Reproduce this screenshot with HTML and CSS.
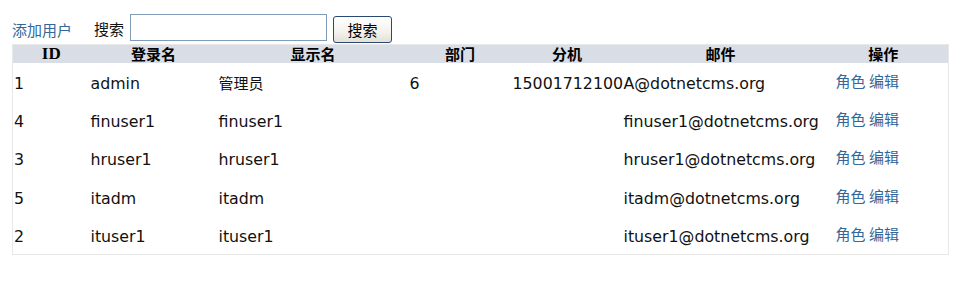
FILE: index.html
```html
<!DOCTYPE html>
<html lang="zh-CN">
<head>
<meta charset="utf-8">
<title>用户管理</title>
<link rel="stylesheet" href="styles.css">
</head>
<body>
<div class="page">
  <div class="toolbar">
    <a class="add-link" href="#">添加用户</a>
    <label class="search-label" for="q">搜索</label>
    <input class="search-input" id="q" type="text">
    <button class="search-btn" type="button">搜索</button>
  </div>
  <table class="users">
    <colgroup>
      <col class="c-id"><col class="c-login"><col class="c-name"><col class="c-dept"><col class="c-ext"><col class="c-mail"><col class="c-op">
    </colgroup>
    <thead>
      <tr>
        <th class="th-id">ID</th><th>登录名</th><th>显示名</th><th>部门</th><th>分机</th><th>邮件</th><th>操作</th>
      </tr>
    </thead>
    <tbody>
      <tr><td>1</td><td>admin</td><td class="cjk">管理员</td><td>6</td><td>15001712100</td><td>A@dotnetcms.org</td><td class="op"><a href="#">角色</a> <a href="#">编辑</a></td></tr>
      <tr><td>4</td><td>finuser1</td><td>finuser1</td><td></td><td></td><td>finuser1@dotnetcms.org</td><td class="op"><a href="#">角色</a> <a href="#">编辑</a></td></tr>
      <tr><td>3</td><td>hruser1</td><td>hruser1</td><td></td><td></td><td>hruser1@dotnetcms.org</td><td class="op"><a href="#">角色</a> <a href="#">编辑</a></td></tr>
      <tr><td>5</td><td>itadm</td><td>itadm</td><td></td><td></td><td>itadm@dotnetcms.org</td><td class="op"><a href="#">角色</a> <a href="#">编辑</a></td></tr>
      <tr><td>2</td><td>ituser1</td><td>ituser1</td><td></td><td></td><td>ituser1@dotnetcms.org</td><td class="op"><a href="#">角色</a> <a href="#">编辑</a></td></tr>
    </tbody>
  </table>
</div>
</body>
</html>
```
FILE: styles.css
```css
html, body {
  margin: 0;
  padding: 0;
  background: #fff;
}
.page {
  padding: 14px 12px 0 12px;
  font-family: "DejaVu Sans", "Noto Sans CJK SC", sans-serif;
  font-size: 15.8px;
  color: #111;
}
.toolbar {
  display: flex;
  align-items: center;
  height: 29px;
}
.add-link {
  color: #336699;
  text-decoration: none;
  font-size: 15px;
  font-family: "Noto Sans CJK SC", sans-serif;
  margin-right: 22px;
  padding-top: 1px;
}
.search-label {
  font-size: 15px;
  font-family: "Noto Sans CJK SC", sans-serif;
  margin-right: 6px;
}
.search-input {
  box-sizing: border-box;
  width: 197px;
  height: 27px;
  margin: 0 6px 0 0;
  border: 1px solid #7f9db9;
  padding: 0 3px;
  align-self: flex-start;
}
.search-btn {
  box-sizing: border-box;
  width: 59px;
  height: 27px;
  margin: 2px 0 0 0;
  align-self: flex-start;
  border: 1px solid #2b4a72;
  border-radius: 3px;
  background: linear-gradient(#ffffff, #f3f2ec 60%, #e3e1d6);
  font-family: "Noto Sans CJK SC", sans-serif;
  font-size: 15px;
  color: #000;
  padding: 0;
  line-height: 24px;
}
.users {
  width: 936px;
  border-collapse: collapse;
  table-layout: fixed;
  border: 1px solid #e8e8e8;
  margin-top: 1px;
}
.c-id { width: 77px; }
.c-login { width: 128px; }
.c-name { width: 191px; }
.c-dept { width: 103px; }
.c-ext { width: 111px; }
.c-mail { width: 196px; }
.c-op { width: 130px; }
.users th {
  background: #d9dde5;
  height: 18px;
  padding: 0;
  font-family: "Noto Sans CJK SC", sans-serif;
  font-weight: bold;
  font-size: 15px;
  line-height: 18px;
  color: #000;
  text-align: center;
  white-space: nowrap;
}
.users th.th-id {
  font-family: "Liberation Serif", serif;
  font-size: 17px;
}
.users td {
  height: 38.4px;
  padding: 3px 0 0 1px;
  box-sizing: border-box;
  line-height: 20px;
  white-space: nowrap;
  overflow: visible;
  vertical-align: middle;
}
.users td.cjk {
  padding-top: 1px;
  font-family: "Noto Sans CJK SC", sans-serif;
  font-size: 15px;
}
.users td.op {
  padding: 0 0 3px 17px;
  font-family: "Noto Sans CJK SC", sans-serif;
  font-size: 15px;
}
.op a {
  color: #336699;
  text-decoration: none;
}
```
